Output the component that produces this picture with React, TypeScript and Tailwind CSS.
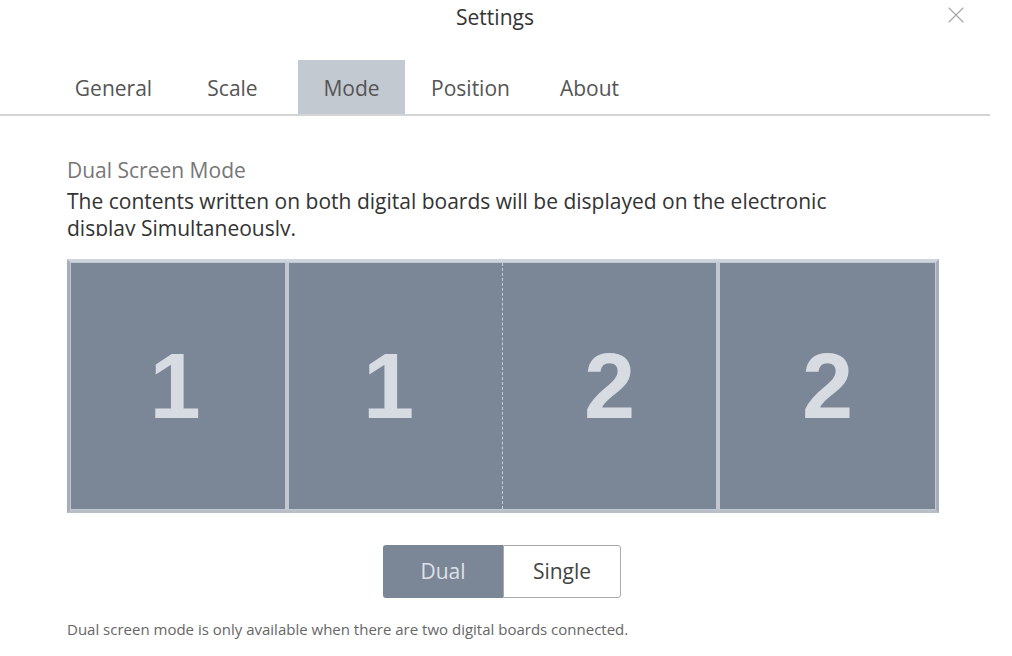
import { X } from "lucide-react";

const tabs = ["General", "Scale", "Mode", "Position", "About"];

export default function App() {
  return (
    <div className="w-[1012px] h-[656px] bg-white overflow-hidden font-['Open_Sans',sans-serif] text-[#333]">
      {/* header */}
      <div className="relative w-[990px] h-[40px] flex items-center justify-center">
        <span className="text-[21px] text-[#333] mt-[-4px]">Settings</span>
        <X className="absolute right-[20px] top-[1px] text-[#a6a6a6]" size={28} strokeWidth={1} />
      </div>

      {/* tabs */}
      <div className="mt-[20px] w-[990px] border-b-2 border-[#d4d4d4] flex gap-[12px] pl-[60px] h-[56px]">
        {tabs.map((t) => (
          <div
            key={t}
            className={
              "w-[107px] h-[54px] pt-[3px] flex items-center justify-center text-[21px] text-[#555] " +
              (t === "Mode" ? "bg-[#c3c9d1]" : "")
            }
          >
            {t}
          </div>
        ))}
      </div>

      {/* content */}
      <div className="pl-[67px] pt-[41px]">
        <div className="text-[21px] text-[#777] leading-[27px]">Dual Screen Mode</div>
        <div className="text-[21px] text-[#333] leading-[27px] mt-[4px] w-[800px] h-[48px] overflow-hidden">
          The contents written on both digital boards will be displayed on the electronic display Simultaneously.
        </div>

        {/* boards */}
        <div className="mt-[23px] w-[872px] h-[254px] bg-[#c2c8d2] border-[3px] border-t-[#cfd4dc] border-l-[#a8aeb8] border-r-[#a8aeb8] border-b-[#b9bfc9] p-[1px] flex gap-[4px]">
          <div className="w-[214px] h-full bg-[#7b8696] flex items-center justify-center">
            <span className="text-[92px] font-bold text-[#d7dbe2] font-['Liberation_Sans',sans-serif] leading-none pr-[6px]">1</span>
          </div>
          <div className="w-[427px] h-full bg-[#7b8696] flex">
            <div className="flex-1 flex items-center justify-center border-r border-dashed border-[#c9ced6]">
              <span className="text-[92px] font-bold text-[#d7dbe2] font-['Liberation_Sans',sans-serif] leading-none pr-[14px]">1</span>
            </div>
            <div className="flex-1 flex items-center justify-center">
              <span className="text-[92px] font-bold text-[#d7dbe2] font-['Liberation_Sans',sans-serif] leading-none">2</span>
            </div>
          </div>
          <div className="w-[215px] h-full bg-[#7b8696] flex items-center justify-center">
            <span className="text-[92px] font-bold text-[#d7dbe2] font-['Liberation_Sans',sans-serif] leading-none">2</span>
          </div>
        </div>

        {/* toggle */}
        <div className="mt-[32px] ml-[316px] flex h-[53px]">
          <div className="w-[120px] bg-[#7b8696] rounded-l-[3px] flex items-center justify-center text-[21px] text-[#dde1e7]">
            Dual
          </div>
          <div className="w-[118px] bg-white border border-[#aaa] rounded-r-[3px] flex items-center justify-center text-[21px] text-[#444]">
            Single
          </div>
        </div>

        <div className="mt-[20px] text-[15px] text-[#666]">
          Dual screen mode is only available when there are two digital boards connected.
        </div>
      </div>
    </div>
  );
}
